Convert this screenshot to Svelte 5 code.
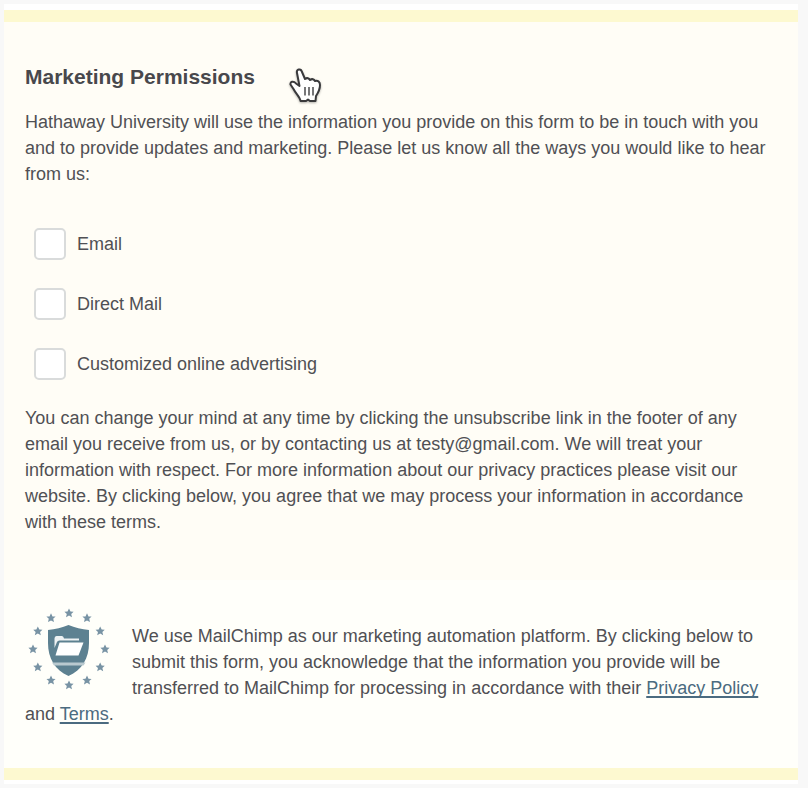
<script>
	const channels = $state([
		{ id: 'email', label: 'Email', checked: false },
		{ id: 'direct-mail', label: 'Direct Mail', checked: false },
		{ id: 'advertising', label: 'Customized online advertising', checked: false }
	]);

	// Ring of stars around the shield
	const stars = Array.from({ length: 12 }, (_, i) => {
		const angle = (i * Math.PI) / 6;
		return { x: 44 + 36 * Math.sin(angle), y: 46 - 36 * Math.cos(angle) };
	});
</script>

<main class="page">
	<form class="card">
		<section class="permissions">
			<h2>Marketing Permissions</h2>
			<p>
				Hathaway University will use the information you provide on this form to be in touch with
				you and to provide updates and marketing. Please let us know all the ways you would like to
				hear from us:
			</p>
			<div class="options">
				{#each channels as channel (channel.id)}
					<label class="option" for={channel.id}>
						<input type="checkbox" id={channel.id} bind:checked={channel.checked} />
						<span>{channel.label}</span>
					</label>
				{/each}
			</div>
			<p>
				You can change your mind at any time by clicking the unsubscribe link in the footer of any
				email you receive from us, or by contacting us at testy@gmail.com. We will treat your
				information with respect. For more information about our privacy practices please visit our
				website. By clicking below, you agree that we may process your information in accordance
				with these terms.
			</p>
		</section>

		<section class="platform">
			<svg class="badge" viewBox="0 0 88 90" aria-hidden="true">
				{#each stars as star}
					<path
						transform="translate({star.x} {star.y})"
						d="M0-4.600 1.500-1.400 4.600-1.300 2.200 .9 3 4.200 0 2.600-3 4.200-2.200 .9-4.600-1.300-1.500-1.400Z"
						fill="#7893a4"
					/>
				{/each}
				<path
					d="M23 27Q34 26 43.500 22Q53 26 64 27V40C64 55 57 67 43.500 73C30 67 23 55 23 40Z"
					fill="#5d8191"
				/>
				<path d="M27 59.500H60.500L58.500 62.500H29Z" fill="#b9c9cf" />
				<path
					d="M29.500 45V35.500Q29.500 33 31.500 33H37Q38.500 33 39 35.500H54V37.500H34.500Q32.500 37.500 32 39Z"
					fill="#eef2f3"
				/>
				<path d="M34.500 39.500H58.500L53.500 52.500H30.500Z" fill="#fff" />
			</svg>
			<p>
				We use MailChimp as our marketing automation platform. By clicking below to submit this
				form, you acknowledge that the information you provide will be transferred to MailChimp for
				processing in accordance with their <a href="#privacy">Privacy Policy</a> and
				<a href="#terms">Terms</a>.
			</p>
		</section>
	</form>

	<svg class="pointer" viewBox="0 0 50 50" aria-hidden="true">
		<path
			d="M17 13C16 9 21 8 22 12L25 19C27 17.500 29 18 30 20C32 18.500 34 19 35 21C38 20 40 22 40 25C40 30 38 33 36 36L35.500 41H30L28 39.500 26 41H20.500C20 37 16 34 13.500 29L10.500 24.500C10 21 14 21 16 23.500L19.500 26Z"
			fill="#fff"
			stroke="#3a3a3c"
			stroke-width="2"
			stroke-linejoin="round"
		/>
		<path d="M25 27V35.500M29 27V35.500M33 27V35.500" stroke="#4a4a4c" stroke-width="1.500" />
	</svg>
</main>

<style>
	:global(body) {
		background: #f8f8f8;
	}

	.page {
		position: relative;
		padding: 4px 10px 4px 4px;
		font-family: 'Liberation Sans', Arial, sans-serif;
		font-size: 18px;
		line-height: 26px;
		color: #505054;
	}

	.card {
		padding: 6px 0 4px;
		background: #fff;
	}

	.permissions {
		padding: 42px 28px 45px 21px;
		border-top: 12px solid #fdf9d0;
		background: #fffdf6;
	}

	h2 {
		margin: 0 0 19px;
		font-size: 21px;
		line-height: 26px;
		font-weight: 700;
		color: #48484c;
	}

	p {
		margin: 0;
	}

	.options {
		display: flex;
		flex-direction: column;
		align-items: flex-start;
		gap: 28px;
		margin: 41px 9px 25px;
	}

	.option {
		display: flex;
		align-items: center;
		gap: 11px;
		cursor: pointer;
	}

	input {
		appearance: none;
		width: 32px;
		height: 32px;
		margin: 0;
		border: 2px solid #d9dbdb;
		border-radius: 5px;
		background: #fff;
		cursor: pointer;
	}

	input:checked {
		background: #5d8191;
	}

	.platform {
		padding: 43px 28px 41px 21px;
		border-bottom: 12px solid #fdf9d0;
		background: #fffffa;
	}

	.badge {
		float: left;
		width: 88px;
		height: 90px;
		margin: -20px 19px 0 0;
	}

	a {
		color: #4b6b80;
		text-decoration: underline;
		text-decoration-thickness: 2px;
		text-underline-offset: 2px;
		text-decoration-skip-ink: none;
	}

	.pointer {
		position: absolute;
		top: 60px;
		left: 280px;
		width: 50px;
		height: 50px;
		fill: none;
		filter: drop-shadow(0 1px 1px rgba(0, 0, 0, 0.3));
		pointer-events: none;
	}
</style>
